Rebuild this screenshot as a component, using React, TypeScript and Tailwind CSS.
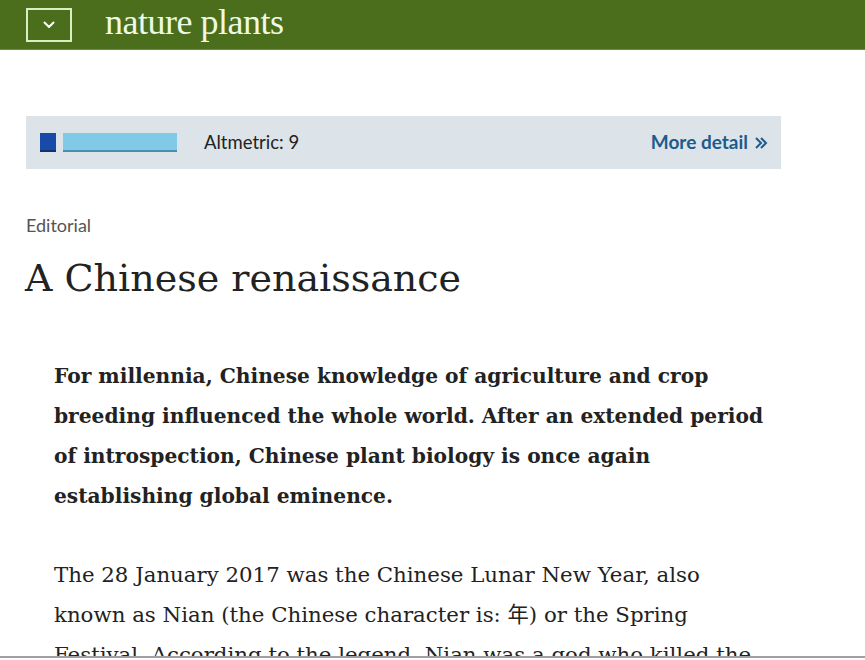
import React from "react";

const serif = { fontFamily: '"DejaVu Serif", serif' };

export default function App() {
  return (
    <div className="w-[865px] h-[660px] overflow-hidden bg-white">
      <div className="h-[658px] overflow-hidden border-b-2 border-[#a0a0a0]">
        <header className="h-[50px] bg-[#4b6e1d] border-b border-[#6d8a45] flex items-center">
          <div className="ml-[26px] w-[46px] h-[34px] border-2 border-[#d8efc4] flex items-center justify-center">
            <svg width="12" height="8" viewBox="0 0 12 8" fill="none">
              <path d="M1.5 1.5 L6 6 L10.5 1.5" stroke="#ffffff" strokeWidth="2" strokeLinecap="round" strokeLinejoin="round" />
            </svg>
          </div>
          <div
            className="ml-[33px] text-[36px] leading-none text-[#eef8e4] tracking-[-0.5px] -mt-[5px]"
            style={{ fontFamily: '"Liberation Serif", serif' }}
          >
            nature plants
          </div>
        </header>

        <div className="mt-[66px] ml-[26px] w-[755px] h-[53px] bg-[#dce4ea] flex items-center">
          <div className="ml-[14px] w-[16px] h-[19px] bg-[#1a4aa8] border-b-2 border-[#0f2f78]" />
          <div className="ml-[7px] w-[114px] h-[19px] bg-[#80cae8] border-b-2 border-[#4b8fb0]" />
          <div className="ml-[27px] text-[18.5px] text-[#222]" style={{ fontFamily: 'Lato, sans-serif' }}>
            Altmetric: 9
          </div>
          <div
            className="ml-auto mr-[13px] text-[19px] font-bold text-[#1d5b8c] flex items-center gap-[6px]"
            style={{ fontFamily: 'Lato, sans-serif' }}
          >
            More detail
            <svg width="14" height="14" viewBox="0 0 14 14" fill="none">
              <path d="M2 2 L7 7 L2 12 M7 2 L12 7 L7 12" stroke="#1d5b8c" strokeWidth="2" />
            </svg>
          </div>
        </div>

        <div className="ml-[26px] mt-[47px] text-[18px] text-[#555] leading-none" style={{ fontFamily: 'Lato, sans-serif' }}>
          Editorial
        </div>
        <h1 className="ml-[25px] mt-[25px] text-[38px] leading-none text-[#222]" style={serif}>
          A Chinese renaissance
        </h1>

        <p className="ml-[54px] mt-[59px] text-[20.2px] font-bold leading-[40px] text-[#222] whitespace-nowrap" style={serif}>
          For millennia, Chinese knowledge of agriculture and crop
          <br />
          breeding influenced the whole world. After an extended period
          <br />
          of introspection, Chinese plant biology is once again
          <br />
          establishing global eminence.
        </p>

        <p
          className="ml-[54px] mt-[39px] text-[21.3px] leading-[40px] text-[#222] whitespace-nowrap"
          style={{ fontFamily: '"DejaVu Serif", "Noto Sans CJK SC", serif' }}
        >
          The 28 January 2017 was the Chinese Lunar New Year, also
          <br />
          known as Nian (the Chinese character is: 年) or the Spring
          <br />
          Festival. According to the legend, Nian was a god who killed the
        </p>
      </div>
    </div>
  );
}
